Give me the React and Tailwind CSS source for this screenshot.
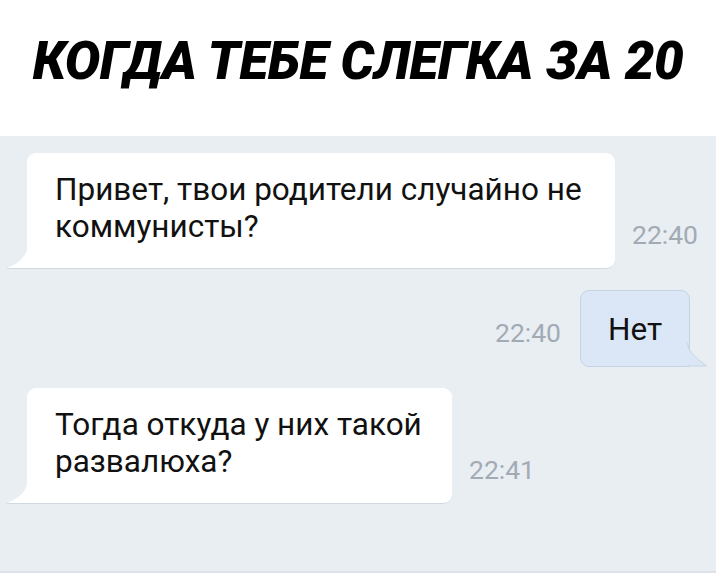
import React from "react";

// incoming bubble tail, bottom-left
const TailLeft = () => (
  <svg className="absolute bottom-[-1px] left-[-21px]" width="23" height="26" viewBox="0 0 23 26">
    <path d="M22 0 Q22 17 1 25 L22 25 Z" fill="#ffffff" />
    <path d="M1 25.5 L22 25.5" stroke="#d3d9e1" strokeWidth="1" />
  </svg>
);

// outgoing bubble tail, bottom-right
const TailRight = () => (
  <svg className="absolute bottom-[-1px] right-[-19px]" width="21" height="24" viewBox="0 0 21 24">
    <path d="M0.5 0 Q0.5 10 19.5 23 L0 23 Z" fill="#dbe7f6" />
    <path d="M0.5 0 Q0.5 10 19.5 23 L0 23" fill="none" stroke="#c5d3e4" strokeWidth="1" />
  </svg>
);

const Time = ({ children, className = "" }) => (
  <span className={"shrink-0 text-[26.5px] leading-none text-[#a2aab3] " + className}>{children}</span>
);

const Incoming = ({ width, lines, time }) => (
  <div className="flex items-end">
    <div
      className={"relative shrink-0 bg-white rounded-t-[9px] rounded-br-[9px] border-b border-[#d3d9e1] pl-[28px] pt-[18px] pb-[23px] " + width}
    >
      <TailLeft />
      {lines.map((l, i) => (
        <div key={i} className="text-[31.5px] leading-[37px] text-[#111] whitespace-nowrap">
          {l}
        </div>
      ))}
    </div>
    <Time className="ml-[17px] mb-[21px]">{time}</Time>
  </div>
);

export default function App() {
  return (
    <div className="w-[716px] h-[573px] flex flex-col bg-white" style={{ fontFamily: "Roboto, 'Liberation Sans', sans-serif" }}>
      <div className="h-[136px] flex items-center justify-center pb-[14px]">
        <h1 className="text-[53px] font-black italic tracking-[-0.5px] leading-none text-black uppercase">
          Когда тебе слегка за 20
        </h1>
      </div>
      <div className="flex-1 bg-[#e9eef3] border-b-2 border-[#dde2e8] flex flex-col gap-[21px] pt-[17px] pl-[27px] pr-[26px]">
        <Incoming
          width="w-[588px]"
          lines={["Привет, твои родители случайно не", "коммунисты?"]}
          time="22:40"
        />
        <div className="flex items-end justify-end">
          <Time className="mr-[19px] mb-[21px]">22:40</Time>
          <div className="relative bg-[#dbe7f6] border border-[#c5d3e4] rounded-t-[9px] rounded-bl-[9px] w-[110px] h-[77px] flex items-center justify-center">
            <span className="text-[31.5px] leading-none text-[#111] pt-[2px]">Нет</span>
            <TailRight />
          </div>
        </div>
        <Incoming
          width="w-[425px]"
          lines={["Тогда откуда у них такой", "развалюха?"]}
          time="22:41"
        />
      </div>
    </div>
  );
}
